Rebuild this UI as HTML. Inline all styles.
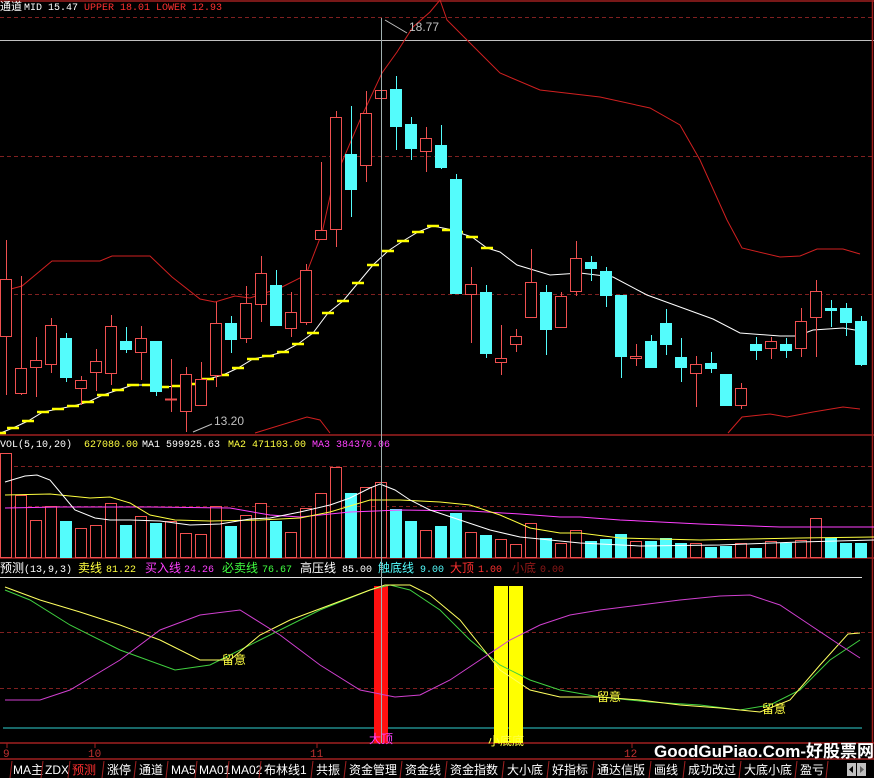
<!DOCTYPE html>
<html><head><meta charset="utf-8"><style>
html,body{margin:0;padding:0;background:#000;width:874px;height:778px;overflow:hidden}
svg{display:block}
text{font-family:"Liberation Mono","Noto Sans CJK SC",monospace;font-size:10px}
.c{font-family:"Liberation Sans","Noto Sans CJK SC",sans-serif;font-size:12px}
</style></head><body>
<svg width="874" height="778" viewBox="0 0 874 778" xmlns="http://www.w3.org/2000/svg">
<rect width="874" height="778" fill="#000"/>
<g stroke="#802020" stroke-dasharray="4,3" stroke-width="1">
<line x1="0" y1="17.5" x2="872" y2="17.5"/>
<line x1="0" y1="156.5" x2="872" y2="156.5"/>
<line x1="0" y1="294.5" x2="872" y2="294.5"/>
<line x1="0" y1="466.5" x2="872" y2="466.5"/>
<line x1="0" y1="506.5" x2="872" y2="506.5"/>
<line x1="0" y1="632.5" x2="872" y2="632.5"/>
<line x1="0" y1="688.5" x2="872" y2="688.5"/>
</g>
<line x1="0" y1="40.5" x2="874" y2="40.5" stroke="#c0c0c0"/>
<g stroke="#a02020" stroke-width="1.5">
<line x1="0" y1="1" x2="874" y2="1"/>
<line x1="0" y1="435" x2="874" y2="435"/>
<line x1="0" y1="558" x2="874" y2="558"/>
<line x1="0" y1="743" x2="874" y2="743"/>
<line x1="0" y1="759" x2="874" y2="759"/>
<line x1="872.5" y1="0" x2="872.5" y2="759"/>
</g>
<text x="0" y="10" fill="#fff" class="c" style="font-size:11px">通道</text>
<text x="24" y="10" fill="#fff">MID 15.47</text>
<text x="84" y="10" fill="#ff3030">UPPER 18.01 LOWER 12.93</text>

<text x="0" y="447" fill="#fff">VOL(5,10,20)</text>
<text x="84" y="447" fill="#ffff40">627080.00</text>
<text x="142" y="447" fill="#fff">MA1 599925.63</text>
<text x="228" y="447" fill="#ffff40">MA2 471103.00</text>
<text x="312" y="447" fill="#ff40ff">MA3 384370.06</text>

<text x="0" y="572" fill="#fff" class="c">预测</text><text x="24" y="572" fill="#fff">(13,9,3)</text>
<text x="78" y="572" fill="#ffff40" class="c">卖线</text><text x="106" y="572" fill="#ffff40">81.22</text>
<text x="145" y="572" fill="#ff40ff" class="c">买入线</text><text x="184" y="572" fill="#ff40ff">24.26</text>
<text x="222" y="572" fill="#40ff40" class="c">必卖线</text><text x="262" y="572" fill="#40ff40">76.67</text>
<text x="300" y="572" fill="#fff" class="c">高压线</text><text x="342" y="572" fill="#fff">85.00</text>
<text x="378" y="572" fill="#54fcfc" class="c">触底线</text><text x="420" y="572" fill="#54fcfc">9.00</text>
<text x="450" y="572" fill="#ff3030" class="c">大顶</text><text x="478" y="572" fill="#ff3030">1.00</text>
<text x="512" y="572" fill="#901818" class="c">小底</text><text x="540" y="572" fill="#901818">0.00</text>

<g fill="none" stroke="#d02020" stroke-width="1">
<polyline points="0,292 7,290 22,286 52,261 100,261 112,256 150,256 172,277 200,299 215,302 235,296 250,298 280,288 300,278 307,272 322,233 333,183 360,120 382,73 397,52 413,27 430,12 440,0"/>
<polyline points="440,0 447,20 467,40 500,73 540,90 600,97 650,108 680,125 700,160 727,220 742,248 780,257 800,256 817,249 843,249 860,254"/>
<polyline points="255,433 307,417 320,420 330,433"/>
<polyline points="728,433 742,417 770,414 787,417 813,412 843,407 860,409"/>
</g>
<polyline fill="none" stroke="#fff" stroke-width="1" points="-2,434 13,428 28,421 43,412 58,409 73,406 88,402 103,395 118,390 133,385 148,385 163,387 178,386 193,384 208,379 223,375 238,368 253,359 268,356 283,352 298,344 313,333 328,313 343,301 358,283 373,265 388,251 403,241 418,232 433,226 448,229 457,232 472,237 487,248 500,252 517,265 550,275 580,273 613,277 647,295 680,307 713,319 740,333 780,336 797,336 813,330 843,328 867,332"/>
<g stroke="#ffff00" stroke-width="2.5">
<line x1="-6" y1="433" x2="6" y2="433"/><line x1="7" y1="428" x2="19" y2="428"/><line x1="22" y1="421" x2="34" y2="421"/><line x1="37" y1="412" x2="49" y2="412"/><line x1="52" y1="409" x2="64" y2="409"/><line x1="67" y1="406" x2="79" y2="406"/><line x1="82" y1="402" x2="94" y2="402"/><line x1="97" y1="395" x2="109" y2="395"/><line x1="112" y1="390" x2="124" y2="390"/><line x1="127" y1="385" x2="139" y2="385"/><line x1="142" y1="385" x2="154" y2="385"/><line x1="157" y1="387" x2="169" y2="387"/><line x1="172" y1="386" x2="184" y2="386"/><line x1="187" y1="384" x2="199" y2="384"/><line x1="202" y1="379" x2="214" y2="379"/><line x1="217" y1="375" x2="229" y2="375"/><line x1="232" y1="368" x2="244" y2="368"/><line x1="247" y1="359" x2="259" y2="359"/><line x1="262" y1="356" x2="274" y2="356"/><line x1="277" y1="352" x2="289" y2="352"/><line x1="292" y1="344" x2="304" y2="344"/><line x1="307" y1="333" x2="319" y2="333"/><line x1="322" y1="313" x2="334" y2="313"/><line x1="337" y1="301" x2="349" y2="301"/><line x1="352" y1="283" x2="364" y2="283"/><line x1="367" y1="265" x2="379" y2="265"/><line x1="382" y1="251" x2="394" y2="251"/><line x1="397" y1="241" x2="409" y2="241"/><line x1="412" y1="232" x2="424" y2="232"/><line x1="427" y1="226" x2="439" y2="226"/><line x1="442" y1="230" x2="454" y2="230"/><line x1="451" y1="232" x2="463" y2="232"/><line x1="466" y1="237" x2="478" y2="237"/><line x1="481" y1="248" x2="493" y2="248"/>
</g>
<g stroke-width="1">
<g stroke="#f05050" fill="#000">
<line x1="6.5" y1="240" x2="6.5" y2="395"/><rect x="0.5" y="279.5" width="11" height="57"/>
<line x1="21.5" y1="276" x2="21.5" y2="395"/><rect x="15.5" y="368.5" width="11" height="25"/>
<line x1="36.5" y1="337" x2="36.5" y2="397"/><rect x="30.5" y="360.5" width="11" height="7"/>
<line x1="51.5" y1="318" x2="51.5" y2="373"/><rect x="45.5" y="325.5" width="11" height="39"/>
<line x1="81.5" y1="376" x2="81.5" y2="405"/><rect x="75.5" y="380.5" width="11" height="8"/>
<line x1="96.5" y1="349" x2="96.5" y2="391"/><rect x="90.5" y="361.5" width="11" height="11"/>
<line x1="111.5" y1="315" x2="111.5" y2="385"/><rect x="105.5" y="326.5" width="11" height="47"/>
<line x1="141.5" y1="326" x2="141.5" y2="380"/><rect x="135.5" y="338.5" width="11" height="14"/>
<line x1="171.5" y1="359" x2="171.5" y2="412"/><line x1="165" y1="399.5" x2="177" y2="399.5" stroke-width="2"/>
<line x1="186.5" y1="367" x2="186.5" y2="432"/><rect x="180.5" y="374.5" width="11" height="37"/>
<line x1="201.5" y1="362" x2="201.5" y2="405"/><rect x="195.5" y="379.5" width="11" height="26"/>
<line x1="216.5" y1="302" x2="216.5" y2="387"/><rect x="210.5" y="323.5" width="11" height="52"/>
<line x1="246.5" y1="286" x2="246.5" y2="343"/><rect x="240.5" y="303.5" width="11" height="35"/>
<line x1="261.5" y1="256" x2="261.5" y2="322"/><rect x="255.5" y="273.5" width="11" height="31"/>
<line x1="291.5" y1="292" x2="291.5" y2="337"/><rect x="285.5" y="312.5" width="11" height="16"/>
<line x1="306.5" y1="264" x2="306.5" y2="325"/><rect x="300.5" y="270.5" width="11" height="52"/>
<line x1="321.5" y1="162" x2="321.5" y2="238"/><rect x="315.5" y="230.5" width="11" height="9"/>
<line x1="336.5" y1="111" x2="336.5" y2="247"/><rect x="330.5" y="117.5" width="11" height="112"/>
<line x1="366.5" y1="91" x2="366.5" y2="182"/><rect x="360.5" y="113.5" width="11" height="52"/>
<rect x="375.5" y="90.5" width="11" height="8"/>
<line x1="426.5" y1="127" x2="426.5" y2="172"/><rect x="420.5" y="138.5" width="11" height="13"/>
<line x1="471.5" y1="267" x2="471.5" y2="343"/><rect x="465.5" y="284.5" width="11" height="10"/>
<line x1="501.5" y1="325" x2="501.5" y2="375"/><rect x="495.5" y="358.5" width="11" height="4"/>
<line x1="516.5" y1="329" x2="516.5" y2="352"/><rect x="510.5" y="336.5" width="11" height="8"/>
<line x1="531.5" y1="249" x2="531.5" y2="317"/><rect x="525.5" y="282.5" width="11" height="35"/>
<line x1="561.5" y1="292" x2="561.5" y2="327"/><rect x="555.5" y="296.5" width="11" height="31"/>
<line x1="576.5" y1="241" x2="576.5" y2="296"/><rect x="570.5" y="258.5" width="11" height="33"/>
<line x1="636.5" y1="344" x2="636.5" y2="366"/><rect x="630.5" y="356.5" width="11" height="2"/>
<line x1="696.5" y1="356" x2="696.5" y2="407"/><rect x="690.5" y="364.5" width="11" height="9"/>
<line x1="741.5" y1="383" x2="741.5" y2="409"/><rect x="735.5" y="388.5" width="11" height="17"/>
<line x1="771.5" y1="337" x2="771.5" y2="359"/><rect x="765.5" y="341.5" width="11" height="7"/>
<line x1="801.5" y1="308" x2="801.5" y2="357"/><rect x="795.5" y="321.5" width="11" height="27"/>
<line x1="816.5" y1="280" x2="816.5" y2="357"/><rect x="810.5" y="291.5" width="11" height="26"/>
</g>
<g stroke="#54fcfc" fill="#54fcfc">
<line x1="66.5" y1="333" x2="66.5" y2="382"/><rect x="60.5" y="338.5" width="11" height="39"/>
<line x1="126.5" y1="327" x2="126.5" y2="353"/><rect x="120.5" y="341.5" width="11" height="8"/>
<line x1="156.5" y1="341" x2="156.5" y2="396"/><rect x="150.5" y="341.5" width="11" height="50"/>
<line x1="231.5" y1="316" x2="231.5" y2="353"/><rect x="225.5" y="323.5" width="11" height="16"/>
<line x1="276.5" y1="270" x2="276.5" y2="325"/><rect x="270.5" y="285.5" width="11" height="40"/>
<line x1="351.5" y1="106" x2="351.5" y2="217"/><rect x="345.5" y="154.5" width="11" height="35"/>
<line x1="396.5" y1="76" x2="396.5" y2="150"/><rect x="390.5" y="89.5" width="11" height="37"/>
<line x1="411.5" y1="117" x2="411.5" y2="160"/><rect x="405.5" y="124.5" width="11" height="24"/>
<line x1="441.5" y1="125" x2="441.5" y2="169"/><rect x="435.5" y="145.5" width="11" height="22"/>
<line x1="456.5" y1="174" x2="456.5" y2="293"/><rect x="450.5" y="179.5" width="11" height="114"/>
<line x1="486.5" y1="285" x2="486.5" y2="358"/><rect x="480.5" y="292.5" width="11" height="61"/>
<line x1="546.5" y1="285" x2="546.5" y2="355"/><rect x="540.5" y="292.5" width="11" height="37"/>
<line x1="591.5" y1="256" x2="591.5" y2="281"/><rect x="585.5" y="262.5" width="11" height="6"/>
<line x1="606.5" y1="267" x2="606.5" y2="307"/><rect x="600.5" y="271.5" width="11" height="24"/>
<line x1="621.5" y1="295" x2="621.5" y2="378"/><rect x="615.5" y="295.5" width="11" height="61"/>
<line x1="651.5" y1="335" x2="651.5" y2="367"/><rect x="645.5" y="341.5" width="11" height="26"/>
<line x1="666.5" y1="309" x2="666.5" y2="355"/><rect x="660.5" y="323.5" width="11" height="21"/>
<line x1="681.5" y1="338" x2="681.5" y2="382"/><rect x="675.5" y="357.5" width="11" height="10"/>
<line x1="711.5" y1="352" x2="711.5" y2="373"/><rect x="705.5" y="363.5" width="11" height="5"/>
<rect x="720.5" y="374.5" width="11" height="31"/>
<line x1="756.5" y1="337" x2="756.5" y2="360"/><rect x="750.5" y="344.5" width="11" height="6"/>
<line x1="786.5" y1="338" x2="786.5" y2="358"/><rect x="780.5" y="344.5" width="11" height="6"/>
<line x1="831.5" y1="300" x2="831.5" y2="327"/><rect x="825.5" y="308.5" width="11" height="2"/>
<line x1="846.5" y1="303" x2="846.5" y2="336"/><rect x="840.5" y="308.5" width="11" height="14"/>
<line x1="861.5" y1="316" x2="861.5" y2="366"/><rect x="855.5" y="321.5" width="11" height="43"/>
</g>
</g>
<line x1="385" y1="20" x2="407" y2="33" stroke="#c0c0c0"/>
<text x="409" y="31" fill="#c0c0c0" class="c">18.77</text>
<line x1="193" y1="432" x2="212" y2="424" stroke="#c0c0c0"/>
<text x="214" y="425" fill="#c0c0c0" class="c">13.20</text>

<g stroke="#f05050" fill="#000">
<rect x="0.5" y="453.5" width="11" height="104"/><rect x="15.5" y="495.5" width="11" height="62"/><rect x="30.5" y="520.5" width="11" height="37"/><rect x="45.5" y="506.5" width="11" height="51"/><rect x="75.5" y="528.5" width="11" height="29"/><rect x="90.5" y="525.5" width="11" height="32"/><rect x="105.5" y="503.5" width="11" height="54"/><rect x="135.5" y="516.5" width="11" height="41"/><rect x="165.5" y="521.5" width="11" height="36"/><rect x="180.5" y="533.5" width="11" height="24"/><rect x="195.5" y="534.5" width="11" height="23"/><rect x="210.5" y="506.5" width="11" height="51"/><rect x="240.5" y="515.5" width="11" height="42"/><rect x="255.5" y="503.5" width="11" height="54"/><rect x="285.5" y="532.5" width="11" height="25"/><rect x="300.5" y="508.5" width="11" height="49"/><rect x="315.5" y="493.5" width="11" height="64"/><rect x="330.5" y="467.5" width="11" height="90"/><rect x="360.5" y="487.5" width="11" height="70"/><rect x="375.5" y="482.5" width="11" height="75"/><rect x="420.5" y="530.5" width="11" height="27"/><rect x="465.5" y="532.5" width="11" height="25"/><rect x="495.5" y="539.5" width="11" height="18"/><rect x="510.5" y="544.5" width="11" height="13"/><rect x="525.5" y="523.5" width="11" height="34"/><rect x="555.5" y="543.5" width="11" height="14"/><rect x="570.5" y="530.5" width="11" height="27"/><rect x="630.5" y="541.5" width="11" height="16"/><rect x="690.5" y="543.5" width="11" height="14"/><rect x="735.5" y="543.5" width="11" height="14"/><rect x="765.5" y="541.5" width="11" height="16"/><rect x="795.5" y="540.5" width="11" height="17"/><rect x="810.5" y="518.5" width="11" height="39"/>
</g>
<g fill="#54fcfc">
<rect x="60" y="521" width="12" height="37"/><rect x="120" y="525" width="12" height="33"/><rect x="150" y="523" width="12" height="35"/><rect x="225" y="526" width="12" height="32"/><rect x="270" y="521" width="12" height="37"/><rect x="345" y="493" width="12" height="65"/><rect x="390" y="509" width="12" height="49"/><rect x="405" y="521" width="12" height="37"/><rect x="435" y="526" width="12" height="32"/><rect x="450" y="513" width="12" height="45"/><rect x="480" y="535" width="12" height="23"/><rect x="540" y="538" width="12" height="20"/><rect x="585" y="541" width="12" height="17"/><rect x="600" y="539" width="12" height="19"/><rect x="615" y="534" width="12" height="24"/><rect x="645" y="541" width="12" height="17"/><rect x="660" y="538" width="12" height="20"/><rect x="675" y="543" width="12" height="15"/><rect x="705" y="547" width="12" height="11"/><rect x="720" y="546" width="12" height="12"/><rect x="750" y="548" width="12" height="10"/><rect x="780" y="543" width="12" height="15"/><rect x="825" y="538" width="12" height="20"/><rect x="840" y="543" width="12" height="15"/><rect x="855" y="543" width="12" height="15"/>
</g>
<g fill="none" stroke-width="1">
<polyline stroke="#ff40ff" points="5,508 60,507 150,507 230,508 270,515 300,517 330,514 350,512 400,510 470,511 520,514 560,517 580,517 620,520 700,524 780,527 874,527"/>
<polyline stroke="#ffff40" points="5,495 50,494 90,498 110,497 130,503 150,515 175,520 210,521 260,520 300,518 330,512 370,500 400,500 440,502 470,505 500,515 530,528 560,533 580,533 620,538 700,540 800,538 874,537"/>
<polyline stroke="#fff" points="5,482 25,476 37,475 50,480 60,492 75,510 95,518 110,520 130,520 160,521 190,525 220,524 250,519 270,518 300,512 330,505 350,498 370,488 380,484 395,490 410,500 430,510 460,520 490,530 520,537 550,540 580,543 640,546 720,545 800,542 874,540"/>
</g>

<line x1="0" y1="577.5" x2="862" y2="577.5" stroke="#e0e0e0"/>
<line x1="3" y1="728" x2="862" y2="728" stroke="#30d0d0"/>
<rect x="374" y="586" width="14" height="157" fill="#ff1010"/>
<rect x="494" y="586" width="14" height="157" fill="#ffff00"/>
<rect x="509" y="586" width="14" height="157" fill="#ffff00"/>
<g fill="none" stroke-width="1">
<polyline stroke="#40d040" points="5,590 30,600 70,625 120,650 175,670 210,665 260,640 320,610 370,590 390,585 410,590 440,610 470,640 500,665 530,680 560,690 600,697 650,702 700,705 740,710 770,705 800,690 830,660 860,640"/>
<polyline stroke="#ffff60" points="5,587 40,600 80,612 120,625 160,640 200,660 230,660 260,635 290,620 330,605 370,590 385,585 410,585 430,595 460,620 480,645 500,670 530,690 560,697 600,697 640,700 680,705 720,708 760,712 790,700 820,665 848,634 860,633"/>
<polyline stroke="#d040d0" points="5,700 40,700 70,690 120,660 160,630 200,615 240,610 280,635 320,665 360,690 395,697 420,695 450,680 480,660 510,640 540,625 570,615 600,610 640,605 680,600 720,596 750,595 780,605 810,625 840,645 860,658"/>
</g>
<line x1="381.5" y1="18" x2="381.5" y2="743" stroke="#a0b0b0"/>
<text x="222" y="664" fill="#ffff40" class="c">留意</text>
<text x="597" y="701" fill="#ffff40" class="c">留意</text>
<text x="762" y="713" fill="#ffff40" class="c">留意</text>
<text x="369" y="743" fill="#ff40ff" class="c">大顶</text>
<text x="488" y="745" fill="#ffff40" class="c">小底底</text>

<g stroke="#a02020"><line x1="7" y1="743" x2="7" y2="748"/><line x1="95" y1="743" x2="95" y2="748"/><line x1="317" y1="743" x2="317" y2="748"/><line x1="632" y1="743" x2="632" y2="748"/></g>
<text x="3" y="757" fill="#c03030" style="font-size:11px">9</text>
<text x="88" y="757" fill="#c03030" style="font-size:11px">10</text>
<text x="310" y="757" fill="#c03030" style="font-size:11px">11</text>
<text x="624" y="757" fill="#c03030" style="font-size:11px">12</text>
<text x="654" y="757" fill="#fff" style="font-family:'Liberation Sans','Noto Sans CJK SC',sans-serif;font-size:17px;font-weight:bold">GoodGuPiao.Com-好股票网</text>

<g fill="#fff">
<text x="13" y="774" class="c">MA主</text>
<text x="45" y="774" class="c">ZDX</text>
<text x="72" y="774" class="c" fill="#ff3030">预测</text>
<text x="107" y="774" class="c">涨停</text>
<text x="139" y="774" class="c">通道</text>
<text x="171" y="774" class="c">MA5</text>
<text x="199" y="774" class="c">MA01</text>
<text x="231" y="774" class="c">MA02</text>
<text x="264" y="774" class="c">布林线1</text>
<text x="316" y="774" class="c">共振</text>
<text x="349" y="774" class="c">资金管理</text>
<text x="405" y="774" class="c">资金线</text>
<text x="450" y="774" class="c">资金指数</text>
<text x="507" y="774" class="c">大小底</text>
<text x="552" y="774" class="c">好指标</text>
<text x="597" y="774" class="c">通达信版</text>
<text x="654" y="774" class="c">画线</text>
<text x="688" y="774" class="c">成功改过</text>
<text x="744" y="774" class="c">大底小底</text>
<text x="800" y="774" class="c">盈亏</text>
</g>
<g stroke="#a02020" stroke-width="1">
<line x1="10" y1="778" x2="12" y2="761"/><line x1="41" y1="778" x2="43" y2="761"/><line x1="68" y1="778" x2="70" y2="761"/><line x1="102" y1="778" x2="104" y2="761"/><line x1="134" y1="778" x2="136" y2="761"/><line x1="166" y1="778" x2="168" y2="761"/><line x1="195" y1="778" x2="197" y2="761"/><line x1="227" y1="778" x2="229" y2="761"/><line x1="259" y1="778" x2="261" y2="761"/><line x1="311" y1="778" x2="313" y2="761"/><line x1="344" y1="778" x2="346" y2="761"/><line x1="400" y1="778" x2="402" y2="761"/><line x1="445" y1="778" x2="447" y2="761"/><line x1="502" y1="778" x2="504" y2="761"/><line x1="547" y1="778" x2="549" y2="761"/><line x1="592" y1="778" x2="594" y2="761"/><line x1="649" y1="778" x2="651" y2="761"/><line x1="683" y1="778" x2="685" y2="761"/><line x1="739" y1="778" x2="741" y2="761"/><line x1="795" y1="778" x2="797" y2="761"/><line x1="826" y1="778" x2="828" y2="761"/>
</g>
<rect x="847" y="763" width="9" height="13" fill="#c0c0c0"/><rect x="857" y="763" width="9" height="13" fill="#c0c0c0"/>
<path d="M853,766 L849,769.5 L853,773Z" fill="#000"/><path d="M860,766 L864,769.5 L860,773Z" fill="#606060"/>
</svg>
</body></html>
